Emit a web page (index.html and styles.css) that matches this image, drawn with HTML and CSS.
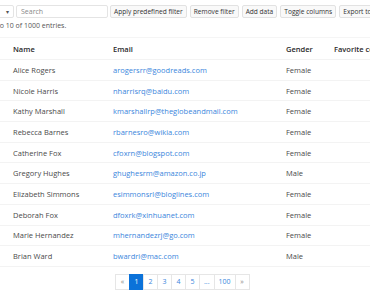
FILE: index.html
```html
<!DOCTYPE html>
<html lang="en">
<head>
  <meta charset="UTF-8">
  <title>Grid</title>
  <link rel="stylesheet" href="styles.css">
</head>
<body>

<div class="wrap">
  <div class="toolbar">
    <div class="select">10 <span class="caret">&#9662;</span></div>
    <input class="search" type="text" placeholder="Search">
    <button class="btn">Apply predefined filter</button>
    <button class="btn">Remove filter</button>
    <button class="btn">Add data</button>
    <button class="btn">Toggle columns</button>
    <button class="btn">Export to CSV</button>
  </div>
  <div class="info">Showing 1 to 10 of 1000 entries.</div>

  <table class="grid">
    <thead>
      <tr><th class="c-name">Name</th><th class="c-email">Email</th><th class="c-gender">Gender</th><th class="c-color">Favorite color</th></tr>
    </thead>
    <tbody id="rows"></tbody>
  </table>

  <div class="pager">
    <span class="pg">&laquo;</span>
    <span class="pg active">1</span>
    <span class="pg">2</span>
    <span class="pg">3</span>
    <span class="pg">4</span>
    <span class="pg">5</span>
    <span class="pg">...</span>
    <span class="pg">100</span>
    <span class="pg">&raquo;</span>
  </div>
</div>

<script>
const people = [
  ["Alice Rogers", "arogersrr@goodreads.com", "Female"],
  ["Nicole Harris", "nharrisrq@baidu.com", "Female"],
  ["Kathy Marshall", "kmarshallrp@theglobeandmail.com", "Female"],
  ["Rebecca Barnes", "rbarnesro@wikia.com", "Female"],
  ["Catherine Fox", "cfoxrn@blogspot.com", "Female"],
  ["Gregory Hughes", "ghughesrm@amazon.co.jp", "Male"],
  ["Elizabeth Simmons", "esimmonsrl@bloglines.com", "Female"],
  ["Deborah Fox", "dfoxrk@xinhuanet.com", "Female"],
  ["Marie Hernandez", "mhernandezrj@go.com", "Female"],
  ["Brian Ward", "bwardri@mac.com", "Male"]
];

const body = document.getElementById("rows");
people.forEach(p => {
  const tr = document.createElement("tr");
  tr.innerHTML = "<td>" + p[0] + "</td><td><a href=\"#\">" + p[1] + "</a></td><td>" + p[2] + "</td><td></td>";
  body.appendChild(tr);
});
</script>
</body>
</html>
```

FILE: styles.css
```css
* { box-sizing: border-box; }
body {
  margin: 0;
  font-family: 'Open Sans', 'Noto Sans', sans-serif;
  font-size: 7.5px;
  color: #4a4a4a;
  background: #fff;
  overflow: hidden;
}
.wrap {
  margin-left: -30px;
  width: 480px;
}
.toolbar {
  display: flex;
  align-items: center;
  gap: 2px;
  padding-top: 5px;
}
.toolbar > * { flex-shrink: 0; }
.select {
  width: 44px;
  height: 13px;
  border: 1px solid #e4e4e4;
  border-radius: 2px;
  display: flex;
  justify-content: space-between;
  align-items: center;
  padding: 0 4px;
  font-size: 7px;
  color: #555;
}
.caret { font-size: 6px; color: #555; }
.search {
  width: 92px;
  height: 13px;
  border: 1px solid #e4e4e4;
  border-radius: 2px;
  font-family: inherit;
  font-size: 7px;
  padding: 0 4px;
  outline: none;
}
.search::placeholder { color: #888; }
.btn {
  height: 13px;
  border: 1px solid #e2e2e2;
  border-radius: 2px;
  background: #f9f9f9;
  font-family: inherit;
  font-size: 6.6px;
  color: #333;
  padding: 0 3px;
  margin: 0 1px 0 0;
  white-space: nowrap;
}
.info {
  padding-top: 3px;
  margin-left: -8px;
  font-size: 7px;
  color: #555;
}
.grid {
  border-collapse: collapse;
  table-layout: fixed;
  width: 411px;
  margin-top: 7px;
  margin-left: 30px;
}
.grid th, .grid td {
  text-align: left;
  padding: 0 0 0 13px;
  height: 20.7px;
  border-bottom: 1px solid #f3f3f3;
  white-space: nowrap;
  overflow: hidden;
}
.grid th {
  font-weight: 600;
  color: #2a2a2a;
  height: 22px;
  border-top: 1px solid #f5f5f5;
}
.c-name { width: 100px; }
.c-email { width: 173px; }
.c-gender { width: 48px; }
.c-color { width: 90px; }
.grid a { color: #3a86dc; text-decoration: none; }
.pager {
  display: flex;
  margin: 7px 0 0 146px;
}
.pg {
  min-width: 15px;
  height: 16px;
  padding: 0 4px;
  border: 1px solid #e6e6e6;
  margin-left: -1px;
  display: flex;
  align-items: center;
  justify-content: center;
  color: #3a86dc;
  font-size: 7px;
}
.pg:first-child, .pg:last-child { color: #888; }
.pg.active {
  background: #0b72d9;
  border-color: #0b72d9;
  color: #fff;
}
```
